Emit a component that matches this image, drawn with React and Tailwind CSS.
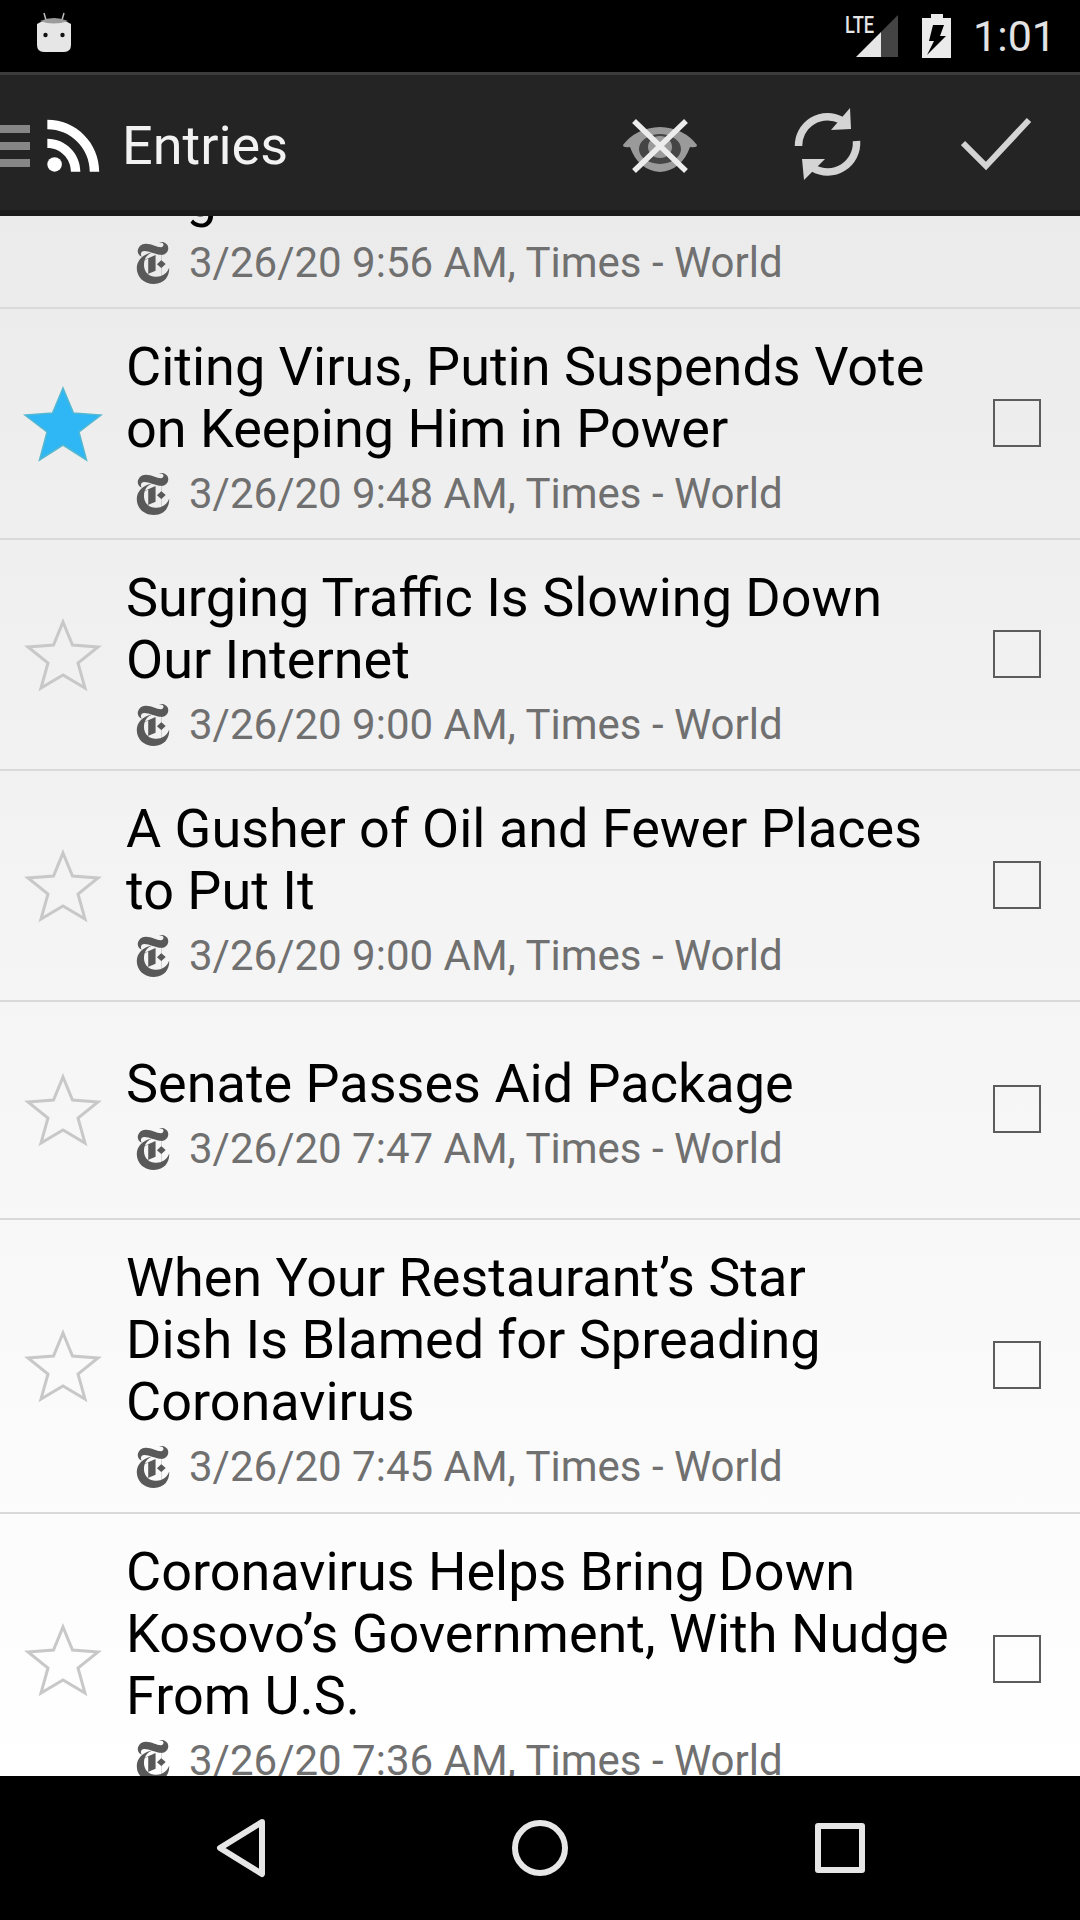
import { MdRssFeed } from "react-icons/md";
import { SiNewyorktimes } from "react-icons/si";

const FONT = "font-['Roboto',sans-serif]";

const rows = [
  { title: ["Citing Virus, Putin Suspends Vote", "on Keeping Him in Power"], time: "9:48 AM", starred: true, h: "h-[231px]" },
  { title: ["Surging Traffic Is Slowing Down", "Our Internet"], time: "9:00 AM", h: "h-[231px]" },
  { title: ["A Gusher of Oil and Fewer Places", "to Put It"], time: "9:00 AM", h: "h-[231px]" },
  { title: ["Senate Passes Aid Package"], time: "7:47 AM", h: "h-[218px]" },
  { title: ["When Your Restaurant’s Star", "Dish Is Blamed for Spreading", "Coronavirus"], time: "7:45 AM", h: "h-[294px]" },
  { title: ["Coronavirus Helps Bring Down", "Kosovo’s Government, With Nudge", "From U.S."], time: "7:36 AM", h: "h-[294px]" },
];

function Star({ filled }) {
  return (
    <svg viewBox="0 0 80 76" className="h-[76px] w-[80px]">
      {filled ? (
        <path
          d="M40 2 L50.5 27 L78 29 L56 46 L63.5 74 L40 59 L16.5 74 L24 46 L2 29 L29.5 27 Z"
          fill="#2eb6f5"
          stroke="#55b8d0"
          strokeWidth="1.5"
        />
      ) : (
        <path
          d="M40 5 L49.5 28 L75 30 L55 46 L62 71 L40 58 L18 71 L25 46 L5 30 L30.5 28 Z"
          fill="none"
          stroke="#c8c8c8"
          strokeWidth="3"
        />
      )}
    </svg>
  );
}

function Meta({ time }) {
  return (
    <div className="mt-[10px] flex h-[48px] items-center">
      <SiNewyorktimes className="ml-[6px] h-[42px] w-[42px] text-[#595959]" />
      <span className="ml-[15px] text-[42px] leading-[48px] whitespace-nowrap text-[#707070]">
        3/26/20 {time}, Times - World
      </span>
    </div>
  );
}

function Title({ lines }) {
  return lines.map((line) => (
    <div key={line} className="text-[54px] leading-[62px] whitespace-nowrap text-black">
      {line}
    </div>
  ));
}

function Row({ title, time, starred, h }) {
  return (
    <div className={`flex shrink-0 items-center border-b-[2px] border-[#d9d9d9] ${h}`}>
      <div className="mr-[23px] ml-[23px] shrink-0">
        <Star filled={starred} />
      </div>
      <div className="min-w-0 flex-1 pt-[6px]">
        <Title lines={title} />
        <Meta time={time} />
      </div>
      <div className="mr-[39px] mb-[2px] h-[48px] w-[48px] shrink-0 border-[2px] border-[#5c5c5c]" />
    </div>
  );
}

function StatusBar() {
  return (
    <div className="flex h-[72px] shrink-0 items-center bg-black">
      <svg viewBox="0 0 36 42" className="mb-[6px] ml-[36px] h-[42px] w-[36px]">
        <path d="M8 1 L10 8 M28 1 L26 8" stroke="#bdbdbd" strokeWidth="1.5" />
        <path d="M1 12 Q18 2 35 12 L35 33 Q35 40 28 40 L8 40 Q1 40 1 33 Z" fill="#e6e6e6" />
        <path d="M4 9 Q18 3 32 9 Q18 14 4 9 Z" fill="#9c9c9c" />
        <circle cx="9.5" cy="23" r="2.2" fill="#111" />
        <circle cx="26.5" cy="23" r="2.2" fill="#111" />
      </svg>
      <div className="ml-auto flex items-center">
        <div className="relative">
          <span className="absolute top-[-1px] left-0 origin-left scale-x-[0.76] text-[24px] leading-[24px] font-medium text-[#e6e6e6]">
            LTE
          </span>
          <svg viewBox="0 0 54 44" className="h-[44px] w-[54px]">
            <path d="M11 43 L36 18 L36 43 Z" fill="#e6e6e6" />
            <path d="M36 18 L53 1 L53 43 L36 43 Z" fill="#444" />
          </svg>
        </div>
        <svg viewBox="0 0 30 44" className="ml-[23px] h-[44px] w-[30px]">
          <path d="M9 0 H21 V4 H29 V44 H0 V4 H9 Z" fill="#ebebeb" />
          <path d="M11 11 H22 L18 22 H24 L5 41 L12 27 H7 Z" fill="#000" />
        </svg>
        <span className="mr-[24px] ml-[21px] text-[43px] leading-none text-[#e3e3e3]">1:01</span>
      </div>
    </div>
  );
}

function Toolbar() {
  return (
    <div className="flex h-[144px] shrink-0 items-center border-t-[3px] border-b-[6px] border-t-[#3c3c3c] border-b-[#1b1b1b] bg-[#242424]">
      <div className="mt-[7px] flex w-[30px] flex-col gap-[9px]">
        <div className="h-[8px] bg-[#868686]" />
        <div className="h-[8px] bg-[#868686]" />
        <div className="h-[8px] bg-[#868686]" />
      </div>
      <MdRssFeed className="mt-[4px] ml-[4px] h-[80px] w-[80px] text-white" />
      <span className="mt-[7px] ml-[8px] text-[54px] leading-none text-[#f2f2f2]">Entries</span>
      <div className="mt-[3px] ml-auto flex items-center">
        <svg viewBox="0 0 76 56" className="mt-[4px] h-[56px] w-[76px]">
          <path d="M1 27 Q14 10 38 9 Q62 10 75 27 Q75 30 68 29 Q60 52 38 54 Q16 52 8 29 Q1 30 1 27 Z" fill="#9a9a9a" />
          <ellipse cx="38" cy="31" rx="21" ry="15" fill="#454545" />
          <ellipse cx="38" cy="29" rx="12" ry="11" fill="#9a9a9a" />
          <path d="M12 3 L64 53 M64 3 L12 53" stroke="#ececec" strokeWidth="5.5" />
        </svg>
        <svg viewBox="0 0 68 73" className="mt-[1px] ml-[95px] h-[73px] w-[68px]">
          <path d="M5.5 38 A29 29 0 0 1 48 12" fill="none" stroke="#d4d4d4" strokeWidth="7.5" />
          <path d="M63.5 33 A29 29 0 0 1 20 60" fill="none" stroke="#d4d4d4" strokeWidth="7.5" />
          <path d="M57 0 L58 21 L38 22 Z" fill="#d4d4d4" />
          <path d="M11 72 L9 51 L32 51 Z" fill="#d4d4d4" />
        </svg>
        <svg viewBox="0 0 72 54" className="mr-[47px] ml-[100px] h-[54px] w-[72px]">
          <path d="M2 26 L25 49 L68 3" fill="none" stroke="#d4d4d4" strokeWidth="6" />
        </svg>
      </div>
    </div>
  );
}

function NavBar() {
  return (
    <div className="flex h-[144px] shrink-0 items-center bg-black">
      <svg viewBox="0 0 50 60" className="ml-[216px] h-[60px] w-[50px]">
        <path d="M46 4 L4 30 L46 56 Z" fill="none" stroke="#e6e6e6" strokeWidth="6" strokeLinejoin="round" />
      </svg>
      <div className="ml-[246px] h-[56px] w-[56px] rounded-full border-[6px] border-[#e6e6e6]" />
      <div className="ml-[247px] h-[50px] w-[50px] rounded-[3px] border-[6px] border-[#e6e6e6]" />
    </div>
  );
}

export default function App() {
  return (
    <div className={`flex h-[1920px] w-[1080px] flex-col overflow-hidden bg-white ${FONT}`}>
      <StatusBar />
      <Toolbar />
      <div className="min-h-0 flex-1 overflow-hidden bg-gradient-to-b from-[#ebebeb] to-white">
        {/* first row is scrolled under the toolbar, only the descender of its title shows */}
        <div className="flex h-[93px] shrink-0 flex-col justify-end border-b-[2px] border-[#d9d9d9] pb-[20px] pl-[126px]">
          <Title lines={["Eng"]} />
          <Meta time="9:56 AM" />
        </div>
        {rows.map((row) => (
          <Row key={row.title[0]} {...row} />
        ))}
      </div>
      <NavBar />
    </div>
  );
}
